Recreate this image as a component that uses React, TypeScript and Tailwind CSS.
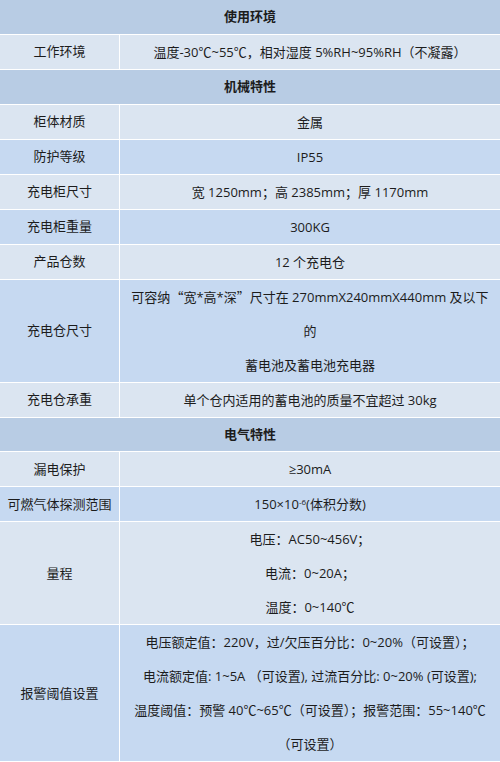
import React from "react";

type Row =
  | { kind: "head"; title: string }
  | { kind: "row"; label: string; lines: React.ReactNode[]; tone: "light" | "dark" };

const cjk = { fontFamily: '"Noto Sans CJK SC", sans-serif' };

const rows: Row[] = [
  { kind: "head", title: "使用环境" },
  {
    kind: "row",
    label: "工作环境",
    tone: "light",
    lines: ["温度-30℃~55℃，相对湿度 5%RH~95%RH（不凝露）"],
  },
  { kind: "head", title: "机械特性" },
  { kind: "row", label: "柜体材质", tone: "light", lines: ["金属"] },
  { kind: "row", label: "防护等级", tone: "dark", lines: ["IP55"] },
  {
    kind: "row",
    label: "充电柜尺寸",
    tone: "light",
    lines: ["宽 1250mm；高 2385mm；厚 1170mm"],
  },
  { kind: "row", label: "充电柜重量", tone: "dark", lines: ["300KG"] },
  { kind: "row", label: "产品仓数", tone: "light", lines: ["12 个充电仓"] },
  {
    kind: "row",
    label: "充电仓尺寸",
    tone: "dark",
    lines: [
      <>
        可容纳<span style={cjk}>“</span>宽*高*深<span style={cjk}>”</span>尺寸在
        270mmX240mmX440mm 及以下
      </>,
      "的",
      "蓄电池及蓄电池充电器",
    ],
  },
  {
    kind: "row",
    label: "充电仓承重",
    tone: "light",
    lines: ["单个仓内适用的蓄电池的质量不宜超过 30kg"],
  },
  { kind: "head", title: "电气特性" },
  { kind: "row", label: "漏电保护", tone: "light", lines: ["≥30mA"] },
  {
    kind: "row",
    label: "可燃气体探测范围",
    tone: "dark",
    lines: [
      <>
        150×10<sup className="text-[8px]">-6</sup>(体积分数)
      </>,
    ],
  },
  {
    kind: "row",
    label: "量程",
    tone: "light",
    lines: ["电压：AC50~456V；", "电流：0~20A；", "温度：0~140℃"],
  },
  {
    kind: "row",
    label: "报警阈值设置",
    tone: "dark",
    lines: [
      "电压额定值：220V，过/欠压百分比：0~20%（可设置）；",
      "电流额定值: 1~5A （可设置), 过流百分比: 0~20% (可设置);",
      "温度阈值：预警 40℃~65℃（可设置）；报警范围：55~140℃",
      "（可设置）",
    ],
  },
];

export default function App() {
  return (
    <div
      className="w-[500px] h-[762px] overflow-hidden bg-white text-[13px] text-[#1c1c1c]"
      style={{ fontFamily: '"Open Sans", "Noto Sans CJK SC", sans-serif' }}
    >
      <div className="grid grid-cols-[119px_1fr] gap-px bg-white">
        {rows.map((row, i) =>
          row.kind === "head" ? (
            <div
              key={i}
              className="col-span-2 bg-[#b8cce4] text-center font-bold leading-[33.75px]"
            >
              {row.title}
            </div>
          ) : (
            <React.Fragment key={i}>
              <div
                className={
                  "flex items-center justify-center whitespace-nowrap " +
                  (row.tone === "light" ? "bg-[#dbe5f1]" : "bg-[#c6d9f1]")
                }
              >
                {row.label}
              </div>
              <div
                className={
                  "text-center whitespace-nowrap " +
                  (row.tone === "light" ? "bg-[#dbe5f1]" : "bg-[#c6d9f1]")
                }
              >
                {row.lines.map((line, j) => (
                  <div key={j} className="leading-[34px]">
                    {line}
                  </div>
                ))}
              </div>
            </React.Fragment>
          ),
        )}
      </div>
    </div>
  );
}
